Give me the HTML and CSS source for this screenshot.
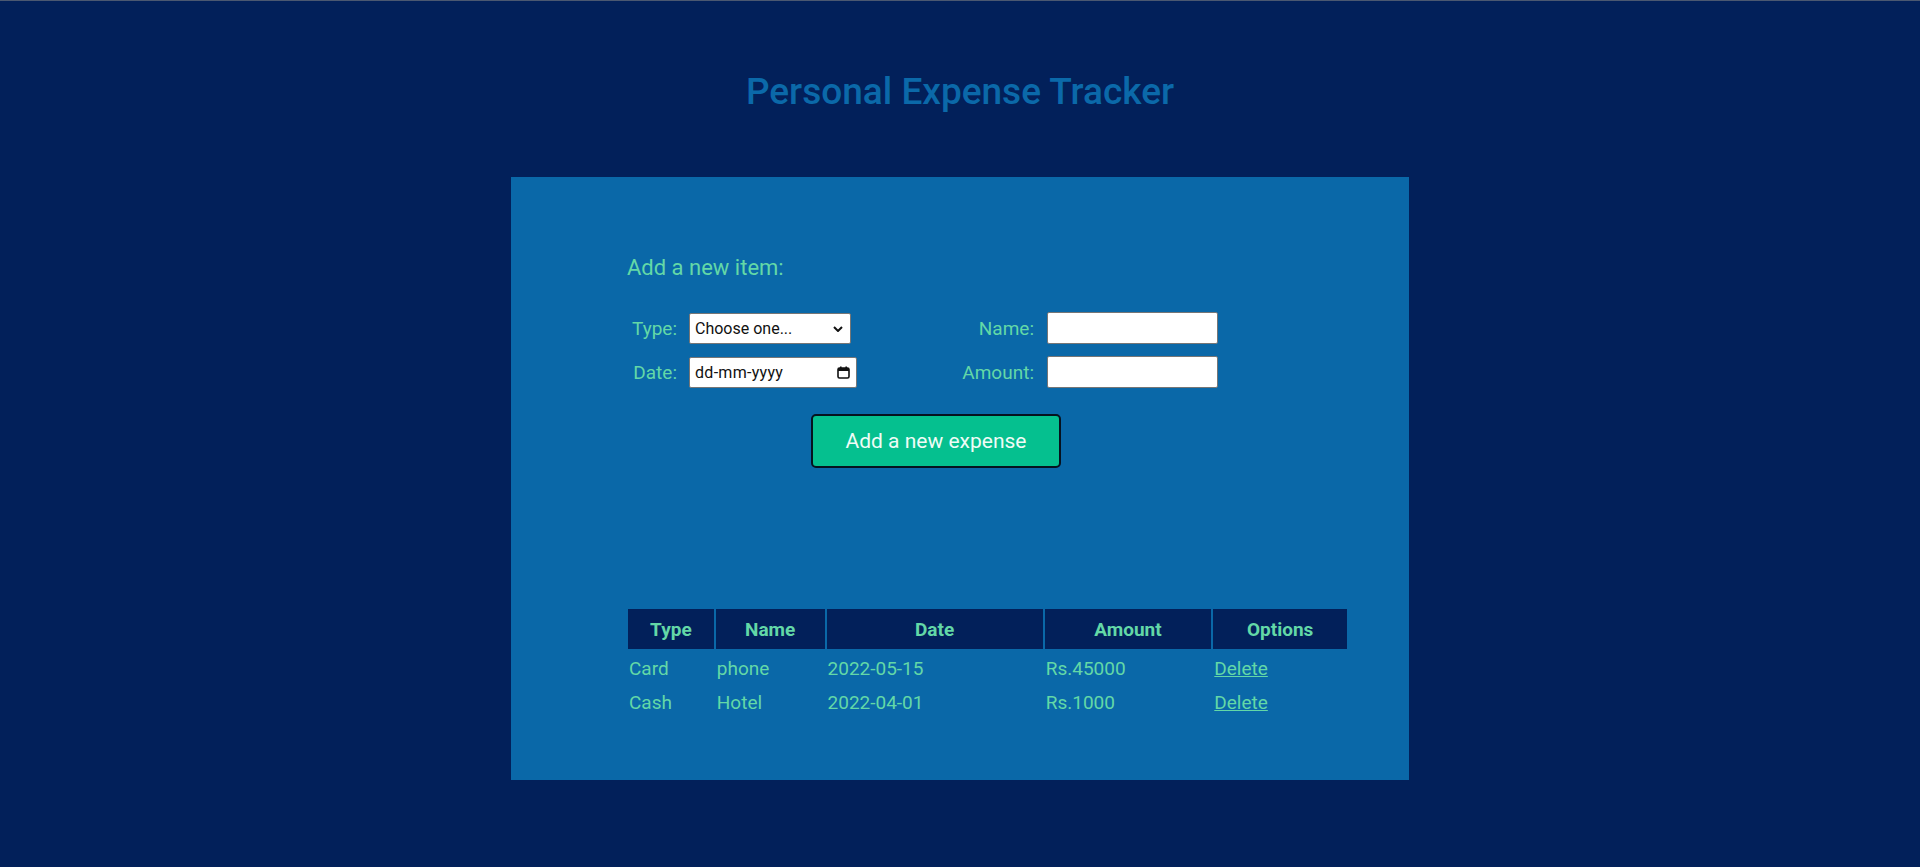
FILE: index.html
```html
<!DOCTYPE html>
<html lang="en">
<head>
<meta charset="utf-8">
<title>Personal Expense Tracker</title>
<link rel="stylesheet" href="styles.css">
</head>
<body>
  <h1 class="title">Personal Expense Tracker</h1>
  <main class="card">
    <h2 class="subtitle">Add a new item:</h2>
    <form class="form">
      <label class="lbl" for="type">Type:</label>
      <span class="select-wrap">
        <select id="type" class="field select">
          <option>Choose one...</option>
          <option>Card</option>
          <option>Cash</option>
        </select>
        <svg class="chev" width="10" height="6" viewBox="0 0 10 6" aria-hidden="true"><path d="M1 1 L5 5 L9 1" fill="none" stroke="#111" stroke-width="2"/></svg>
      </span>
      <label class="lbl lbl-right" for="name">Name:</label>
      <input id="name" class="field text" type="text">

      <label class="lbl" for="date">Date:</label>
      <span class="field date">
        <input id="date" class="date-input" type="text" placeholder="dd-mm-yyyy">
        <svg class="cal" width="13" height="13" viewBox="0 0 13 13" aria-hidden="true">
          <rect x="1" y="2" width="11" height="10" rx="1.5" fill="none" stroke="#111" stroke-width="1.6"/>
          <rect x="1" y="2" width="11" height="3" fill="#111"/>
          <rect x="3" y="0.5" width="1.6" height="2.5" fill="#111"/>
          <rect x="8.4" y="0.5" width="1.6" height="2.5" fill="#111"/>
        </svg>
      </span>
      <label class="lbl lbl-right" for="amount">Amount:</label>
      <input id="amount" class="field text" type="text">
    </form>
    <button class="btn" type="button">Add a new expense</button>
    <table class="list">
      <thead>
        <tr>
          <th class="c-type">Type</th>
          <th class="c-name">Name</th>
          <th class="c-date">Date</th>
          <th class="c-amount">Amount</th>
          <th class="c-opt">Options</th>
        </tr>
      </thead>
      <tbody>
        <tr>
          <td>Card</td>
          <td>phone</td>
          <td>2022-05-15</td>
          <td>Rs.45000</td>
          <td><a href="#" class="del">Delete</a></td>
        </tr>
        <tr>
          <td>Cash</td>
          <td>Hotel</td>
          <td>2022-04-01</td>
          <td>Rs.1000</td>
          <td><a href="#" class="del">Delete</a></td>
        </tr>
      </tbody>
    </table>
  </main>
</body>
</html>
```

FILE: styles.css
```css
html, body {
  margin: 0;
  padding: 0;
}
body {
  background: #02205a;
  border-top: 1px solid #4b5871;
  min-height: 866px;
  font-family: Roboto, "Noto Sans", sans-serif;
  color: #63d8a7;
}
.title {
  margin: 69px 0 63px;
  text-align: center;
  font-size: 37px;
  line-height: 44px;
  font-weight: 500;
  color: #0b69a9;
}
.card {
  box-sizing: border-box;
  width: 898px;
  margin: 0 auto;
  background: #0a68a8;
  padding: 76px 60px 61px 116px;
}
.subtitle {
  margin: 0;
  font-size: 22px;
  line-height: 30px;
  font-weight: 400;
  color: #63d8a7;
}
.form {
  display: grid;
  grid-template-columns: 50px 168px 166px 171px;
  grid-auto-rows: 32px;
  column-gap: 12px;
  row-gap: 12px;
  margin-top: 29px;
  align-items: center;
}
.lbl {
  font-size: 19px;
  text-align: right;
  color: #63d8a7;
}
.lbl-right {
  margin-right: 1px;
}
.field {
  box-sizing: border-box;
  background: #fff;
  border: 1px solid #767676;
  border-radius: 2px;
  font-family: Roboto, "Noto Sans", sans-serif;
  font-size: 15px;
  color: #111;
}
.select-wrap {
  position: relative;
  display: block;
  width: 162px;
  height: 31px;
}
.select {
  -webkit-appearance: none;
  appearance: none;
  width: 162px;
  height: 31px;
  padding: 0 24px 0 5px;
  font-size: 16px;
  outline: none;
}
.chev {
  position: absolute;
  right: 8px;
  top: 13px;
  pointer-events: none;
}
.date {
  display: flex;
  align-items: center;
  width: 168px;
  height: 31px;
  padding: 0 6px 0 5px;
}
.date-input {
  flex: 1;
  min-width: 0;
  border: 0;
  outline: none;
  padding: 0;
  background: transparent;
  font-family: Roboto, "Noto Sans", sans-serif;
  font-size: 16px;
  letter-spacing: 0.3px;
  color: #111;
}
.date-input::placeholder {
  color: #111;
  opacity: 1;
}
.cal {
  flex: none;
}
.text {
  width: 171px;
  height: 32px;
}
.btn {
  display: block;
  box-sizing: border-box;
  width: 250px;
  height: 54px;
  margin: 26px 0 0 184px;
  background: #05c08f;
  border: 2px solid #06121f;
  border-radius: 5px;
  color: #effcf6;
  font-family: Roboto, "Noto Sans", sans-serif;
  font-size: 21px;
  padding: 0;
}
.list {
  margin: 139px 0 0 -1px;
  border-collapse: separate;
  border-spacing: 2px;
  font-size: 19px;
}
.list th {
  background: #02205a;
  color: #63d8a7;
  font-weight: 700;
  height: 40px;
  padding: 0 1px;
  box-sizing: border-box;
  text-align: center;
}
.list td {
  height: 32px;
  padding: 3px 1px 0;
  box-sizing: border-box;
  text-align: left;
  color: #63d8a7;
}
.c-type { width: 86px; }
.c-name { width: 109px; }
.c-date { width: 217px; }
.c-amount { width: 167px; }
.c-opt { width: 134px; }
.del {
  color: #63d8a7;
  text-decoration: underline;
}
```
